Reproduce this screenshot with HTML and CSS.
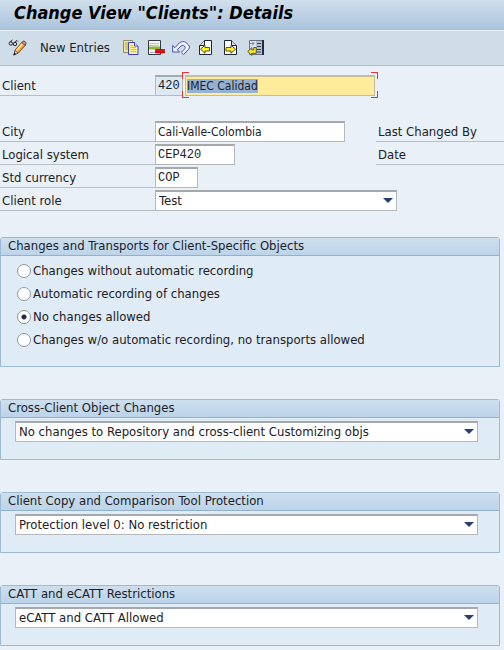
FILE: index.html
```html
<!DOCTYPE html>
<html lang="en">
<head>
<meta charset="utf-8">
<meta name="viewport" content="width=device-width, initial-scale=1">
<title>Change View "Clients": Details</title>
<link rel="stylesheet" href="styles.css">
</head>
<body>
<header class="titlebar"><h1>Change View "Clients": Details</h1></header>

<div class="toolbar" role="toolbar" aria-label="Application toolbar">
  <button type="button" class="tool tool-edit" aria-label="Display or change">
    <svg width="20" height="18" viewBox="0 0 20 18">
      <g fill="none" stroke="#222" stroke-width="1"><circle cx="2.800" cy="4.500" r="1.700"/><circle cx="7" cy="5" r="1.700"/><path d="M2 3L4.500 1M6.500 3.500L9 1.500l1 1"/></g>
      <path d="M6 15.500l1.300-4.700L14.200 3l3.300 3-7.300 8.200z" fill="#ff9d24" stroke="#4b3017" stroke-width=".8"/>
      <path d="M8.500 11.500l6.300-7" stroke="#ffe9a0" stroke-width="1.800"/>
      <path d="M13.800 3.500l1-1.200c1.400-.9 3.800 1 3.200 2.600l-1 1.300z" fill="#f0876a" stroke="#4c3530" stroke-width=".8"/>
      <path d="M6 15.800l1.200-4 2.800 2.400z" fill="#fff" stroke="#333" stroke-width=".7"/><path d="M5.200 16.700l1.200-3.200 1.800 1.600z" fill="#111"/>
    </svg>
  </button>
  <button type="button" class="tool tool-text">New Entries</button>
  <div class="tool-group">
    <button type="button" class="tool" aria-label="Copy as">
      <svg width="18" height="18" viewBox="0 0 18 18">
        <path d="M1.500 1.500h9v12h-9z" fill="#f4e98c" stroke="#8f8f5a"/><path d="M3 4h4M3 6h3M3 8h3M3 10h3" stroke="#aaa44e"/>
        <path d="M6.500 3.500h6l3.500 3.500v8.500H6.500z" fill="#fff08a" stroke="#3a3fd4"/><path d="M12.500 3.500V7H16" fill="#fff" stroke="#3a3fd4"/>
        <path d="M8.500 6.500h2.500M8.500 8.500h5.500M8.500 10.500h5.500M8.500 12.500h5.500" stroke="#d9c343"/>
      </svg>
    </button>
    <button type="button" class="tool" aria-label="Delete">
      <svg width="18" height="18" viewBox="0 0 18 18">
        <path d="M1.500 1.500h12v14h-12z" fill="#f5f8f5" stroke="#333a45"/><path d="M3 4.500h9M3 6.500h9" stroke="#bbc5c8"/>
        <path d="M2 7.500h11v3H2z" fill="#8fb733"/><path d="M3 13.500h6" stroke="#aab4b8"/>
        <path d="M8.500 10.500h9v3.500h-9z" fill="#e60b10" stroke="#7b1115" stroke-width=".7"/>
      </svg>
    </button>
    <button type="button" class="tool" aria-label="Undo change">
      <svg width="18" height="18" viewBox="0 0 18 18">
        <path d="M.7 6.500V13h6.800L5.300 10.800 9 7c1.200-1 2.600-.8 3.500.2 1 1 .9 2-.1 3l-3 3 2.200 2.300 5-5.200c1.300-1.500 1.200-3 0-4.300L14 3.500c-2-1.500-4.500-1.300-6.500.3L3 8.700z" fill="#edf3fc" stroke="#4a50bd" stroke-linejoin="round"/>
      </svg>
    </button>
    <button type="button" class="tool" aria-label="Previous entry">
      <svg width="18" height="18" viewBox="0 0 18 18">
        <path d="M7.500 1.500h7v14h-12V6.500z" fill="#f8fbff" stroke="#24272c"/><path d="M7.500 1.500v5h-5" fill="#d4dce5" stroke="#24272c"/>
        <path d="M3.500 10.200l4.500-4v2.300h4.500V12H8v2.300z" fill="#ffef20" stroke="#4b4620" stroke-width=".9"/>
      </svg>
    </button>
    <button type="button" class="tool" aria-label="Next entry">
      <svg width="18" height="18" viewBox="0 0 18 18">
        <path d="M2.500 1.500h7l5 5v9h-12z" fill="#f8fbff" stroke="#24272c"/><path d="M9.500 1.500v5h5" fill="#d4dce5" stroke="#24272c"/>
        <path d="M13.500 10.200l-4.500-4v2.300H4V12h5v2.300z" fill="#ffef20" stroke="#4b4620" stroke-width=".9"/>
      </svg>
    </button>
    <button type="button" class="tool" aria-label="Other entry">
      <svg width="18" height="18" viewBox="0 0 18 18">
        <path d="M2.500 1.500h14v14h-14z" fill="#dce5ef" stroke="#657286"/><path d="M9 2h7v13H9z" fill="#b4bed6"/><path d="M16 1v15" stroke="#252b38" stroke-width="2"/>
        <path d="M10 4.500h4M10 7.500h4M10 10.500h4M10 13h4" stroke="#3d465f"/><path d="M3 4.500h4M5 2.500l2 2-2 2" fill="none" stroke="#808895"/>
        <path d="M.8 12.500l4-3.800v2.200h2V8.500h2.500v5.800H4.800v2.200z" fill="#ffe820" stroke="#4b4620" stroke-width=".9"/>
      </svg>
    </button>
  </div>
</div>

<form class="content">
  <div class="row row-client">
    <label class="caption" for="client">Client</label>
    <input class="field mono field-client" id="client" value="420" readonly>
    <span class="focus-frame"><input class="field field-name" id="name" value="IMEC Calidad" aria-label="Client name"><i class="corners-left"></i><i class="corners-right"></i></span>
  </div>

  <div class="rows details">
    <div class="row">
      <label class="caption" for="city">City</label>
      <span class="slot"><input class="field field-city" id="city" value="Cali-Valle-Colombia"></span>
      <span class="caption audit">Last Changed By</span>
    </div>
    <div class="row">
      <label class="caption" for="system">Logical system</label>
      <span class="slot"><input class="field mono field-system" id="system" value="CEP420"></span>
      <span class="caption audit">Date</span>
    </div>
    <div class="row"><label class="caption" for="currency">Std currency</label><input class="field mono field-currency" id="currency" value="COP"></div>
    <div class="row"><label class="caption" for="role">Client role</label><span class="dropdown dropdown-role"><select class="field" id="role"><option>Test</option></select></span></div>
  </div>

  <section class="panel">
    <h2 id="transports">Changes and Transports for Client-Specific Objects</h2>
    <div class="choices" role="radiogroup" aria-labelledby="transports">
      <label class="choice"><input type="radio" name="rec">Changes without automatic recording</label>
      <label class="choice"><input type="radio" name="rec">Automatic recording of changes</label>
      <label class="choice"><input type="radio" name="rec" checked>No changes allowed</label>
      <label class="choice"><input type="radio" name="rec">Changes w/o automatic recording, no transports allowed</label>
    </div>
  </section>

  <section class="panel">
    <h2><label for="cross">Cross-Client Object Changes</label></h2>
    <div class="panel-body"><span class="dropdown"><select class="field" id="cross"><option>No changes to Repository and cross-client Customizing objs</option></select></span></div>
  </section>

  <section class="panel">
    <h2><label for="protection">Client Copy and Comparison Tool Protection</label></h2>
    <div class="panel-body"><span class="dropdown"><select class="field" id="protection"><option>Protection level 0: No restriction</option></select></span></div>
  </section>

  <section class="panel">
    <h2><label for="catt">CATT and eCATT Restrictions</label></h2>
    <div class="panel-body"><span class="dropdown"><select class="field" id="catt"><option>eCATT and CATT Allowed</option></select></span></div>
  </section>
</form>
<script src="script.js"></script>
</body>
</html>
```
FILE: styles.css
```css
* { box-sizing: border-box; }

body {
  margin: 0;
  background: #e9f0f7;
  color: #1c2026;
  font: 13px/18px "DejaVu Sans Condensed", "DejaVu Sans", sans-serif;
}

.titlebar {
  height: 30px;
  padding-left: 14px;
  background: linear-gradient(#d0dfec, #a9c3dc);
}

h1 {
  margin: 0;
  color: #000;
  font-size: 18px;
  font-style: italic;
  font-weight: bold;
  line-height: 26px;
}

.toolbar {
  display: flex;
  align-items: center;
  height: 36px;
  padding-left: 8px;
  border-top: 1px solid #e8f0f7;
  border-bottom: 1px solid #a9bdd1;
  background: #cfdde8;
}

.tool {
  display: block;
  padding: 0;
  border: 0;
  background: none;
  color: inherit;
  font: inherit;
}

.tool svg { display: block; }
.tool-text { margin: 0 12px; }
.tool-group { display: flex; gap: 7px; }

.content { padding-top: 9px; }

.row { display: flex; height: 21px; }
.rows { display: grid; gap: 2px; }
.row-client { margin-bottom: 25px; }

.caption {
  flex: 0 0 155px;
  padding: 2px 2px 0;
  border-bottom: 1px solid #b7bec4;
}

.slot { flex: 0 0 221px; }
.audit { flex: 1 1 0; }

.field {
  display: block;
  height: 21px;
  padding: 0 2px;
  border: 1px solid #b4b9be;
  border-top: 2px solid #a4a9ae;
  border-radius: 0;
  outline: 0;
  background: #fff;
  color: inherit;
  font: inherit;
  font-size: 12px;
}

.mono { font-family: "Liberation Mono", monospace; }

.field-client { width: 28px; background: #dce8f2; }
.field-city { width: 190px; }
.field-system { width: 80px; }
.field-currency { width: 43px; }

.focus-frame { position: relative; margin-left: 2px; }
.field-name {
  width: 190px;
  padding: 0 1px;
  border-color: #c5bd93;
  background: #ffeb9c;
}
.field-name::selection { background: #95b1d3; color: #1c2026; }

.corners-left,
.corners-right {
  position: absolute;
  top: -3px;
  bottom: -2px;
  width: 6px;
  pointer-events: none;
}
.corners-left { left: -3px; }
.corners-right { right: -2px; }

.corners-left::before,
.corners-left::after,
.corners-right::before,
.corners-right::after {
  content: "";
  position: absolute;
  width: 6px;
  height: 6px;
  border: 0 solid #ec3036;
}
.corners-left::before { top: 0; border-width: 1px 0 0 1px; }
.corners-left::after { bottom: 0; border-width: 0 0 1px 1px; }
.corners-right::before { top: 0; border-width: 1px 1px 0 0; }
.corners-right::after { bottom: 0; border-width: 0 1px 1px 0; }

.details { margin-bottom: 26px; }

.dropdown { position: relative; display: block; }
.dropdown .field {
  width: 100%;
  padding: 0 3px;
  appearance: none;
  font-size: 13px;
}
.dropdown::after {
  content: "";
  position: absolute;
  top: 8px;
  right: 4px;
  border: 5px solid transparent;
  border-top-color: #243f70;
  border-bottom: 0;
  pointer-events: none;
}
.dropdown-role { width: 242px; }

.panel {
  margin: 0 4px 32px 0;
  border: 1px solid #9cb9d5;
  border-radius: 3px 3px 0 0;
  background: #dfebf5;
}
.panel:last-child { margin-bottom: 0; }

.panel h2 {
  height: 18px;
  margin: 0;
  padding-left: 7px;
  border-bottom: 1px solid #93b0cd;
  background: linear-gradient(#cddfee, #bcd3e9);
  font-size: 13px;
  font-weight: normal;
  line-height: 16px;
}

.panel-body { padding: 3px 21px 17px 14px; }

.choices { padding: 3px 0 15px 16px; }
.choice { display: flex; align-items: center; gap: 2px; height: 23px; }

.choice input {
  width: 14px;
  height: 14px;
  margin: 0;
  border: 1px solid #92989f;
  border-radius: 50%;
  appearance: none;
  background: #fff;
}
.choice input:checked { background: radial-gradient(circle, #252946 0 2px, #fff 3px); }
```
FILE: script.js
```js
const nameField = document.getElementById("name");
nameField.focus();
nameField.select();
```
